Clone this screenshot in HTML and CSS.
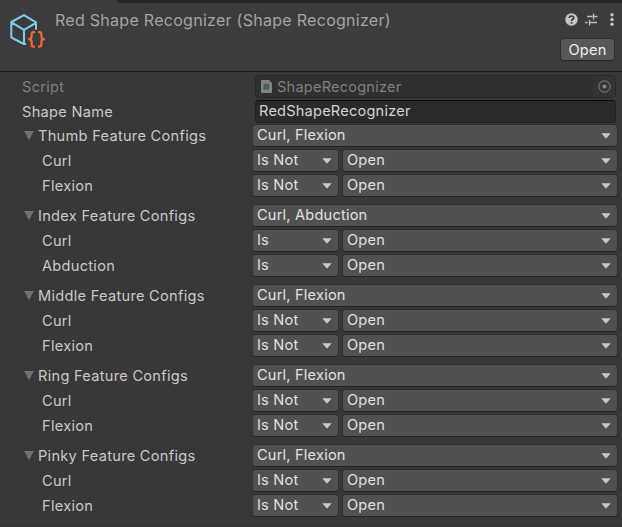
FILE: index.html
```html
<!DOCTYPE html>
<html lang="en">
<head>
<meta charset="utf-8">
<title>Inspector</title>
<link rel="stylesheet" href="styles.css">
</head>
<body>
<div class="tabs"><div class="tab"></div></div>
<header class="header">
  <svg class="asset" width="38" height="36" viewBox="0 0 38 36" fill="none">
    <g stroke="#7bcbf2" stroke-width="2" stroke-linejoin="round" stroke-linecap="round">
      <path d="M28 16V9.300L16 2.200 3.300 9V24.500L16 31H17.300M3.500 9.300L16 16.800 28 9.800M16 16.800V30.500"/>
    </g>
    <g stroke="#f2673a" stroke-width="2.200">
      <path d="M27 19.200H25.800Q23.600 19.200 23.600 21.200V23.500Q23.600 26.200 20.300 26.200Q23.600 26.200 23.600 28.700V31.500Q23.600 33.600 25.800 33.600H27M30 19.200H31.200Q33.400 19.200 33.400 21.200V23.500Q33.400 26.200 36.700 26.200Q33.400 26.200 33.400 28.700V31.500Q33.400 33.600 31.200 33.600H30"/>
    </g>
  </svg>
  <h1 class="title">Red Shape Recognizer (Shape Recognizer)</h1>
  <div class="actions">
    <div class="icons">
      <svg width="13" height="13" viewBox="0 0 13 13"><circle cx="6.500" cy="6.500" r="6.200" fill="#c4c4c4"/><path d="M4.300 5V4.600Q4.500 3 6.500 3T8.700 4.800Q8.700 5.900 7.500 6.400Q6.600 6.800 6.600 7.900" fill="none" stroke="#3c3c3c" stroke-width="1.700"/><path d="M5.700 9h1.800v1.600H5.700z" fill="#3c3c3c"/></svg>
      <svg width="13" height="13" viewBox="0 0 13 13" fill="none" stroke="#bdbdbd" stroke-width="1.300"><path d="M2 3.500H7.500M8.500 .5V6.500M8.500 3.500H12.500M0 9.500H2.500M4.500 6.800V12.500M4.500 9.500H12"/></svg>
      <svg class="menu" width="4" height="13" viewBox="0 0 4 13" fill="#c4c4c4"><circle cx="2" cy="1.800" r="1.700"/><circle cx="2" cy="6.500" r="1.700"/><circle cx="2" cy="11.200" r="1.700"/></svg>
    </div>
    <button class="open">Open</button>
  </div>
</header>
<main id="properties">
  <div class="row base disabled">
    <div class="label">Script</div>
    <div class="object">
      <svg width="11" height="13" viewBox="0 0 11 13"><path d="M0 1Q0 0 1 0H8L11 3V12Q11 13 10 13H1Q0 13 0 12Z" fill="#828282"/><path d="M4.500 3.500L3.700 10M7.300 3.500L6.500 10M2.500 5.500H8.500M2.200 8H8.200" stroke="#35603e" stroke-width="1.300"/></svg>
      <span>ShapeRecognizer</span>
      <div class="picker"><svg width="13" height="13" viewBox="0 0 13 13"><circle cx="6.500" cy="6.500" r="5.600" fill="none" stroke="#858585"/><circle cx="6.500" cy="6.500" r="2" fill="#858585"/></svg></div>
    </div>
  </div>
  <div class="row base name">
    <div class="label">Shape Name</div>
    <div class="textfield">RedShapeRecognizer</div>
  </div>
</main>
<script src="inspector.js"></script>
</body>
</html>
```

FILE: styles.css
```css
* { box-sizing: border-box; }
body {
  margin: 0;
  height: 527px;
  overflow: hidden;
  background: #383838;
  border-bottom: 1px solid #303030;
  color: #c8c8c8;
  font: 14.600px/20px Inter, sans-serif;
  letter-spacing: 0.200px;
}
.tabs { height: 3px; background: #282828; }
.tab { width: 117px; height: 3px; background: #3c3c3c; }
.header {
  display: flex;
  height: 69px;
  padding: 9px 7px 0 8px;
  background: #3c3c3c;
  border-bottom: 1px solid #1a1a1a;
}
.asset { flex: none; margin-top: 1px; }
.title {
  flex: 1;
  margin: -3px 0 0 9px;
  color: #a4a4a4;
  font-size: 16px;
  font-weight: 400;
  line-height: 22px;
  letter-spacing: 0.280px;
  white-space: nowrap;
}
.actions { display: flex; flex-direction: column; align-items: flex-end; }
.icons { display: flex; gap: 7px; margin: 1px 1px 0 0; }
.menu { margin-left: 5px; }
.open {
  width: 55px;
  height: 23px;
  margin-top: 12px;
  padding: 0;
  border: 1px solid #303030;
  border-bottom-color: #242424;
  border-radius: 4px;
  background: #585858;
  color: #eeeeee;
  font: inherit;
  letter-spacing: inherit;
}
#properties { padding-top: 3px; }
.row { display: flex; height: 25px; padding: 0 5px 0 22px; }
.row > .label { width: 230px; line-height: 24px; flex: none; letter-spacing: 0.280px; }
.row.base > .label { width: 233px; }
.row.base { padding-right: 6px; }
.disabled { color: #7f7f7f; }
.group { height: 80px; margin-top: -1px; }
.group + .group { margin-top: 0; }
.group .row { padding-right: 4.500px; }
.child > .label { padding-left: 20px; line-height: 25px; }
.fold { display: flex; align-items: center; height: 23px; }
.fold svg { margin: 0 4px 0 2px; }
.object, .textfield, .dropdown {
  display: flex;
  align-items: center;
  height: 23px;
  border: 1px solid #282828;
  border-radius: 4px;
}
.object { flex: 1; padding-left: 5px; background: #303030; }
.object span { margin-left: 5px; }
.picker { display: flex; align-items: center; justify-content: center; width: 22px; height: 21px; margin-left: auto; background: #343434; border-radius: 0 3px 3px 0; }
.textfield {
  flex: 1;
  padding: 0 0 1px 3px;
  background: #2a2a2a;
  border-color: #212121;
  border-top-color: #0d0d0d;
  color: #d2d2d2;
}
.dropdown {
  flex: 1;
  justify-content: space-between;
  padding: 0 6px 1px 4px;
  background: #515151;
  border-color: #303030;
  border-bottom-color: #242424;
  color: #e0e0e0;
}
.dropdown.mode { flex: none; width: 87px; margin-right: 3px; }
.dropdown svg { margin-top: 1px; }
```

FILE: inspector.js
```js
const fingers = [
  ["Thumb", "Is Not", ["Curl", "Flexion"]],
  ["Index", "Is", ["Curl", "Abduction"]],
  ["Middle", "Is Not", ["Curl", "Flexion"]],
  ["Ring", "Is Not", ["Curl", "Flexion"]],
  ["Pinky", "Is Not", ["Curl", "Flexion"]]
];

const dropdown = (text, kind = "") =>
  `<div class="dropdown ${kind}"><span>${text}</span><svg width="10" height="6" viewBox="0 0 10 6"><path d="M.3.300H9.700L5 5.700Z" fill="#c8c8c8"/></svg></div>`;

const arrow = '<svg width="10" height="9" viewBox="0 0 10 9"><path d="M0 0H10L5 9Z" fill="#707070"/></svg>';

document.getElementById("properties").insertAdjacentHTML("beforeend", fingers.map(([finger, mode, features]) => `
  <section class="group">
    <div class="row"><div class="label fold">${arrow}<span>${finger} Feature Configs</span></div>${dropdown(features.join(", "))}</div>
    ${features.map(feature => `<div class="row child"><div class="label">${feature}</div>${dropdown(mode, "mode")}${dropdown("Open")}</div>`).join("")}
  </section>`).join(""));
```
